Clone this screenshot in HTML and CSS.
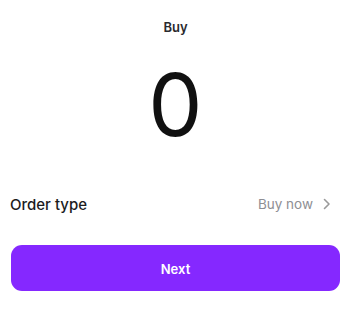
FILE: index.html
```html
<!DOCTYPE html>
<html lang="en">
  <head>
    <meta charset="UTF-8" />
    <meta name="viewport" content="width=device-width, initial-scale=1.0" />
    <title>Buy</title>
    <link rel="stylesheet" href="styles.css">
  </head>
  <body>
    <div class="screen">
      <div class="title">Buy</div>
      <div class="amount">0</div>
      <div class="row">
        <span class="label">Order type</span>
        <span class="value">
          Buy now
          <svg class="chev" width="8" height="12" viewBox="0 0 8 12">
            <path d="M1.5 1.5 L6 6 L1.5 10.5" fill="none" stroke="#9a9a9a" stroke-width="1.6" stroke-linecap="round" stroke-linejoin="round" />
          </svg>
        </span>
      </div>
      <button class="btn">Next</button>
    </div>
  </body>
</html>
```

FILE: styles.css
```css
body {
  margin: 0;
  background: #fff;
  font-family: Inter, 'Noto Sans', sans-serif;
  color: #1c1c1e;
}
.screen {
  display: flex;
  flex-direction: column;
  padding: 18px 10px 0 11px;
}
.title {
  text-align: center;
  font-size: 13px;
  font-weight: 600;
  line-height: 18px;
  color: #2a2a2e;
}
.amount {
  text-align: center;
  font-size: 86px;
  font-weight: 400;
  line-height: 100px;
  margin-top: 19px;
  color: #111;
}
.row {
  display: flex;
  justify-content: space-between;
  align-items: center;
  margin-top: 37px;
  height: 24px;
}
.label {
  font-size: 15px;
  font-weight: 500;
  margin-left: -1px;
}
.value {
  display: flex;
  align-items: center;
  gap: 10px;
  font-size: 13.5px;
  color: #8e8e93;
  margin-right: 9px;
}
.btn {
  margin-top: 29px;
  height: 46px;
  border: none;
  border-radius: 11px;
  background: #8528ff;
  color: #fff;
  font-family: Inter, sans-serif;
  font-size: 13px;
  font-weight: 600;
  padding-top: 3px;
}
```
